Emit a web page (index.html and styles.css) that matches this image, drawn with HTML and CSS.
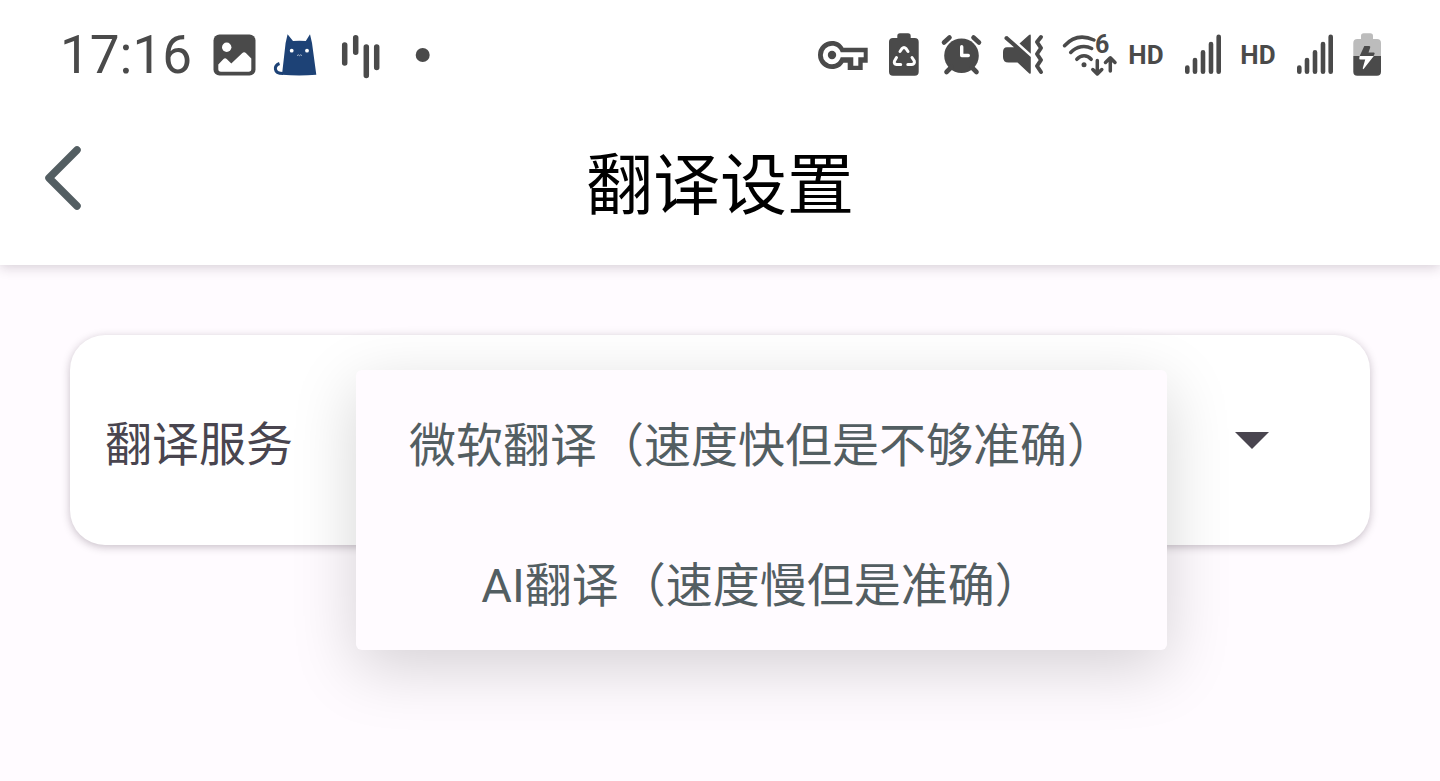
FILE: index.html
```html
<!DOCTYPE html>
<html lang="zh-CN">
<head>
  <meta charset="UTF-8" />
  <meta name="viewport" content="width=device-width, initial-scale=1" />
  <title>翻译设置</title>
  <link rel="stylesheet" href="styles.css">
</head>
<body>
  <header class="top">
    <div class="status-bar">
      <div class="status-left">
        <span class="clock">17:16</span>
        <!-- picture -->
        <svg class="icon" width="44" height="44" viewBox="0 0 44 44">
          <rect x="0.5" y="1.5" width="42" height="41" rx="6" />
          <circle class="cut" cx="13.7" cy="14.3" r="4.7" />
          <path class="cut" d="M5.3 31.5L10.5 26q1.6-1.6 3.2 0l4.6 4.4 10.8-10.2q2-1.7 4 0l5.2 5.3V36q0 2.7-2.7 2.7H8q-2.7 0-2.7-2.7z" />
        </svg>
        <!-- cat -->
        <svg class="icon" width="44" height="44" viewBox="0 0 44 44">
          <path class="cat-body" d="M9 41.8L12.6 10 14.6 1.2 20 8q6.5-.7 12.8 0L37 1.2 39 10l4.3 31.8q-17 1.5-34.3 0z" />
          <path class="cat-tail" d="M6.5 30.5C1 32.5 0 40.5 10 40.5" />
          <circle class="cut" cx="18.7" cy="17.7" r="1.9" />
          <circle class="cut" cx="34" cy="17.7" r="1.9" />
          <path class="cat-mouth" d="M24 22.7l1.3-.9 1.2.9 1.2-.9 1.3.9" />
        </svg>
        <!-- sound bars -->
        <svg class="icon" width="56" height="44" viewBox="0 0 56 44">
          <path class="line bars" d="M11.7 12v18M22.7 4.7v14.6M33.3 14v28.5M43.7 14v20.6" />
        </svg>
        <svg class="icon" width="36" height="44" viewBox="0 0 36 44">
          <circle cx="17.7" cy="22" r="7" />
        </svg>
      </div>
      <div class="status-right">
        <!-- vpn key -->
        <svg class="icon" width="50" height="44" viewBox="0 0 50 44">
          <path d="M14 8c5.5 0 9.3 2.7 11.5 6.7H49.7v15h-5V37H29.7v-7.3H25.5C23.3 33.5 19.5 36 14 36a14 14 0 0 1 0-28z" />
          <path class="cut" d="M14 12.8c4.4 0 7.5 2.5 8.7 6.5H45.7v5H40.3v8.4h-5v-8.4H22.7c-1.2 4-4.3 6.9-8.7 6.9a9.2 9.2 0 0 1 0-18.4z" />
          <circle cx="14" cy="22" r="4.2" />
        </svg>
        <!-- battery protection -->
        <svg class="icon" width="34" height="44" viewBox="0 0 34 44">
          <path d="M9.3 5V3q0-2.7 2.7-2.7h8q2.7 0 2.7 2.7v2h4q4 0 4 4v29.7q0 4-4 4H5q-4 0-4-4V9q0-4 4-4z" />
          <path class="cut-line recycle" d="M12 18.5l2.1-3q1.900-2.200 3.800 0l2.100 3M24 24.500l2.300 3.500q.7 3-2.500 3.500h-4M12.700 31.500H8.700q-3.200-.5-2.200-3.500l2-3.500" />
        </svg>
        <!-- alarm -->
        <svg class="icon" width="40" height="44" viewBox="0 0 40 44">
          <circle cx="19.5" cy="22.7" r="17.3" />
          <path class="line thick" d="M2 9.5l5.5-5M31.5 4.5l5.5 5M9.5 34L4.5 39M29.5 34l5 5" />
          <path class="cut-line hands" d="M19.7 13.7V22.5h6.6" />
        </svg>
        <!-- mute with vibration -->
        <svg class="icon" width="40" height="44" viewBox="0 0 40 44">
          <path d="M17.5 10.5l9.500-8.500q1.800-1.200 1.800.8v18zM5 14.300h7L2.500 6q-.5-3 2.700-3L28.800 24v15.500q0 2-1.800.7L15.500 29.500H6.500q-5.500 0-5.500-5.500v-5q0-4.700 4-4.700z" />
          <path class="line wave" d="M39 4l-4 5 4 6-4 6 4 6-4 6 4 6" />
        </svg>
        <span class="network">
          <!-- wifi 6 -->
          <svg class="icon" width="54" height="44" viewBox="0 0 54 44">
            <path class="line" d="M2.5 12.7C10.5 4 21 2 32 7M8.7 19.5c6-6.5 14.5-7.5 21-4M14.8 26.3c4.3-4.6 10.2-4.6 14.4 0" />
            <circle cx="22" cy="31.7" r="2.5" />
            <text class="wifi-gen" x="33" y="20">6</text>
            <path class="line" d="M35.3 27.5v13M30.8 36.5l4.5 4.5 4.5-4.5M48.3 38V25M43.5 29.5l4.8-4.7 4.7 4.7" />
          </svg>
          <span class="hd">HD</span>
        </span>
        <svg class="icon" width="36" height="44" viewBox="0 0 36 44">
          <path class="line signal" d="M3.3 34.5v4.3M11 27v11.8M19 19.2v19.6M27 11v27.8M34.7 3.7v35.1" />
        </svg>
        <span class="hd">HD</span>
        <svg class="icon" width="36" height="44" viewBox="0 0 36 44">
          <path class="line signal" d="M3.3 34.5v4.3M11 27v11.8M19 19.2v19.6M27 11v27.8M34.7 3.7v35.1" />
        </svg>
        <!-- charging battery -->
        <svg class="icon" width="30" height="44" viewBox="0 0 30 44">
          <path class="empty" d="M9 6V3q0-2.7 2.7-2.7h6.6Q21 .3 21 3v3h4q4 0 4 4v13H1.3V10q0-4 4-4z" />
          <path d="M1.3 23H29v15.7q0 4-4 4H5.3q-4 0-4-4z" />
          <path d="M12.3 13h4.9q1.5 0 1 1.5L16.5 19.5h5.2q1.5 0 .8 1.5l-1 2H7.7z" />
          <path class="cut" d="M7.7 23H21.8L12 35.5q-1.3 1.5-1.2-.5l2.4-8.5H8.5q-1.7 0-1.2-1.5z" />
        </svg>
      </div>
    </div>

    <div class="title-bar">
      <button class="back" type="button" aria-label="返回">
        <svg width="36" height="64" viewBox="0 0 36 64">
          <path d="M32 4L4 32l28 28" />
        </svg>
      </button>
      <h1>翻译设置</h1>
    </div>
  </header>

  <main>
    <div class="card">
      <label for="service">翻译服务</label>
      <button class="toggle" type="button" aria-label="展开">
        <svg width="34" height="17" viewBox="0 0 34 17"><path d="M0 0h34L17 17z" /></svg>
      </button>
      <select class="menu" id="service" name="service" size="2">
        <option value="microsoft">微软翻译（速度快但是不够准确）</option>
        <option value="ai">AI翻译（速度慢但是准确）</option>
      </select>
    </div>
  </main>
</body>
</html>
```
FILE: styles.css
```css
* {
  box-sizing: border-box;
}

body {
  margin: 0;
  min-height: 100vh;
  background: #fffbff;
  color: #49454f;
  font-family: Roboto, "Noto Sans CJK SC", sans-serif;
  font-size: 47px;
}

button {
  display: flex;
  padding: 0;
  border: none;
  background: none;
  cursor: pointer;
}

/* status bar */
.top {
  background: #fff;
  box-shadow: 0 2px 12px rgba(40, 20, 40, 0.2);
}

.status-bar {
  display: flex;
  justify-content: space-between;
  align-items: center;
  padding: 24px 58px 24px 60px;
  color: #4a4a4a;
}

.status-left,
.status-right,
.network {
  display: flex;
  align-items: center;
}

.status-left {
  gap: 16px;
}

.status-right {
  gap: 20px;
}

.network {
  gap: 12px;
}

.clock {
  margin-right: 5px;
  font-size: 53px;
  line-height: 62px;
}

.hd {
  width: 36px;
  font-size: 26px;
  line-height: 30px;
  font-weight: 700;
  text-align: center;
}

.icon {
  flex: none;
  overflow: visible;
  fill: #4a4a4a;
}

.icon .line {
  fill: none;
  stroke: #4a4a4a;
  stroke-width: 3.5;
  stroke-linecap: round;
  stroke-linejoin: round;
}

.icon .bars {
  stroke-width: 5.5;
}

.icon .thick,
.icon .signal {
  stroke-width: 4.6;
}

.icon .wave {
  stroke-width: 4;
}

.icon .cut {
  fill: #fff;
}

.icon .cut-line {
  fill: none;
  stroke: #fff;
}

.icon .recycle {
  stroke-width: 3;
  stroke-linecap: round;
}

.icon .hands {
  stroke-width: 3.4;
  stroke-linecap: round;
  stroke-linejoin: round;
}

.icon .cat-body {
  fill: #1d4276;
}

.icon .cat-tail {
  fill: none;
  stroke: #1d4276;
  stroke-width: 3;
}

.icon .cat-mouth {
  fill: none;
  stroke: #fff;
  stroke-width: 0.6;
}

.icon .empty {
  fill: #bcbcbc;
}

.wifi-gen {
  font-size: 25px;
  font-weight: 700;
}

/* title bar */
.title-bar {
  display: grid;
  grid-template-columns: 1fr auto 1fr;
  align-items: center;
  padding: 10px 45px 29px;
}

.back {
  justify-self: start;
}

.back path {
  fill: none;
  stroke: #535e62;
  stroke-width: 7.5;
  stroke-linecap: round;
  stroke-linejoin: round;
}

h1 {
  margin: 0;
  padding-top: 16px;
  color: #000;
  font-size: 67px;
  line-height: 100px;
  font-weight: 400;
}

/* settings */
main {
  padding: 70px;
}

.card {
  position: relative;
  display: flex;
  justify-content: space-between;
  align-items: center;
  padding: 70px 101px 70px 35px;
  border-radius: 35px;
  background: #fff;
  box-shadow: 0 2px 8px rgba(40, 20, 40, 0.26);
}

.card label {
  padding-top: 10px;
  line-height: 60px;
}

.toggle path {
  fill: #49454f;
}

/* opened list lies over the card */
.menu {
  position: absolute;
  top: 35px;
  left: 22%;
  padding: 0;
  border: none;
  border-radius: 6px;
  outline: none;
  overflow: hidden;
  background: #fffbff;
  color: #535e62;
  font: inherit;
  box-shadow: 0 18px 64px rgba(0, 0, 0, 0.17);
}

.menu option {
  padding: 37px 53px 34px;
  text-align: center;
}
```
